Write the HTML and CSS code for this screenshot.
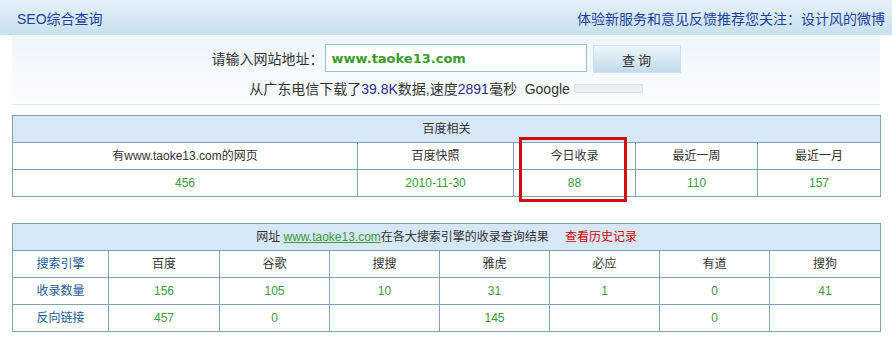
FILE: index.html
```html
<!DOCTYPE html>
<html lang="zh-CN">
<head>
  <meta charset="UTF-8">
  <title>SEO综合查询</title>
  <link rel="stylesheet" href="styles.css">
</head>
<body>

  <div class="topbar">
    <span class="topbar-title">SEO综合查询</span>
    <span class="topbar-note">体验新服务和意见反馈推荐您关注：设计风的微博</span>
  </div>

  <div class="search">
    <div class="search-row">
      <label class="search-label" for="siteInput">请输入网站地址：</label>
      <input type="text" id="siteInput" class="search-input" value="www.taoke13.com">
      <button class="search-button">查 询</button>
    </div>
    <div class="speed">
      从广东电信下载了<span class="num">39.8K</span>数据,速度<span class="num">2891</span>毫秒&nbsp; Google
      <span class="speed-bar"></span>
    </div>
  </div>

  <div class="content">
    <!-- 百度相关 -->
    <div class="table-wrap">
      <table class="grid baidu">
        <colgroup>
          <col style="width:345px"><col style="width:156px"><col style="width:122px"><col style="width:122px"><col style="width:123px">
        </colgroup>
        <tr><th colspan="5">百度相关</th></tr>
        <tr>
          <td>有www.taoke13.com的网页</td>
          <td>百度快照</td>
          <td>今日收录</td>
          <td>最近一周</td>
          <td>最近一月</td>
        </tr>
        <tr class="values">
          <td>456</td>
          <td>2010-11-30</td>
          <td>88</td>
          <td>110</td>
          <td>157</td>
        </tr>
      </table>
      <div class="mark"></div>
    </div>

    <!-- 各大搜索引擎 -->
    <table class="grid engines">
      <colgroup>
        <col style="width:96px"><col style="width:111px"><col style="width:110px"><col style="width:110px">
        <col style="width:110px"><col style="width:110px"><col style="width:110px"><col style="width:111px">
      </colgroup>
      <tr>
        <th colspan="8">网址 <a href="#" class="site-link">www.taoke13.com</a>在各大搜索引擎的收录查询结果<a href="#" class="history-link">查看历史记录</a></th>
      </tr>
      <tr>
        <td class="label">搜索引擎</td>
        <td>百度</td><td>谷歌</td><td>搜搜</td><td>雅虎</td><td>必应</td><td>有道</td><td>搜狗</td>
      </tr>
      <tr class="values">
        <td class="label">收录数量</td>
        <td>156</td><td>105</td><td>10</td><td>31</td><td>1</td><td>0</td><td>41</td>
      </tr>
      <tr class="values">
        <td class="label">反向链接</td>
        <td>457</td><td>0</td><td></td><td>145</td><td></td><td>0</td><td></td>
      </tr>
    </table>
  </div>

</body>
</html>
```

FILE: styles.css
```css
body {
  margin: 0;
  background: #fff;
  font-family: "Liberation Sans", "Noto Sans CJK SC", sans-serif;
  font-size: 12px;
  color: #333;
}

.topbar {
  height: 35px;
  display: flex;
  align-items: center;
  justify-content: space-between;
  padding: 0 7px 0 17px;
  background: linear-gradient(#e6f1fa, #c8e0ee);
  border-bottom: 1px solid #f2f8fc;
  font-size: 14px;
  color: #1f3f9f;
}

.search {
  background: linear-gradient(#eef6fc, #fbfdff);
  padding-top: 8px;
  margin: 0 12px;
  border-bottom: 1px solid #e3ebf0;
  padding-bottom: 5px;
}
.search-row {
  display: flex;
  justify-content: center;
  align-items: center;
  height: 28px;
}
.search-label {
  font-size: 14px;
  color: #333;
  margin-right: 1px;
}
.search-input {
  box-sizing: border-box;
  width: 262px;
  height: 28px;
  border: 1px solid #93c3d3;
  padding: 0 6px;
  font-family: "DejaVu Sans", sans-serif;
  font-size: 13px;
  font-weight: bold;
  color: #3b9b2b;
  background: #fff;
  outline: none;
}
.search-button {
  box-sizing: border-box;
  width: 88px;
  height: 28px;
  margin-left: 6px;
  margin-top: 2px;
  border: 1px solid #cfe1ec;
  background: linear-gradient(#edf5fb, #c3dbeb);
  font-family: "Noto Sans CJK SC", sans-serif;
  font-size: 13px;
  color: #333;
  cursor: pointer;
}

.speed {
  margin-top: 7px;
  line-height: 20px;
  text-align: center;
  font-size: 14px;
  color: #333;
}
.speed .num {
  color: #2c2c8c;
}
.speed-bar {
  display: inline-block;
  width: 67px;
  height: 7px;
  margin-left: 0;
  vertical-align: 1px;
  border: 1px solid #e2e2e2;
  background: #efefef;
}

.content {
  padding: 10px 12px 0;
}

.table-wrap {
  position: relative;
  margin-bottom: 26px;
}

table.grid {
  width: 868px;
  border-collapse: collapse;
  table-layout: fixed;
}
.grid th,
.grid td {
  height: 26px;
  line-height: 16px;
  padding: 0;
  border: 1px solid #7ea2b8;
  text-align: center;
  font-weight: normal;
  color: #333;
}
.grid th {
  background: #d6e7f8;
}
.grid tr.values td {
  color: #3d9a3d;
}
.grid td.label,
.grid tr.values td.label {
  color: #1d5b96;
}

.site-link {
  color: #3d9a3d;
}
.history-link {
  color: #d40000;
  text-decoration: none;
  margin-left: 16px;
}

/* 红框标注 今日收录 */
.mark {
  position: absolute;
  left: 507px;
  top: 22px;
  width: 102px;
  height: 59px;
  border: 3px solid #d01010;
}
```
